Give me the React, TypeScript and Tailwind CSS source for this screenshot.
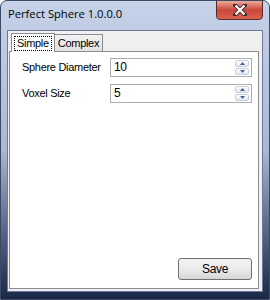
export default function App() {
  return (
    <div className="w-[270px] h-[300px] relative overflow-hidden rounded-t-[7px] border border-[#3c4a66] bg-gradient-to-b from-[#c6d2e8] via-[#a9b8d6] to-[#1b2848] flex flex-col font-['Liberation_Sans',Arial,sans-serif]">
      {/* Title bar */}
      <div className="h-[29px] flex items-start justify-between pl-[7px] pr-[6px] shrink-0">
        <div className="pt-[5px] text-[11.2px] text-black font-['Open_Sans',sans-serif] leading-[16px]">
          Perfect Sphere 1.0.0.0
        </div>
        <div className="w-[47px] h-[20px] -mt-px rounded-b-[4px] border border-[#5a2a2a] bg-gradient-to-b from-[#e9a99a] via-[#c9463a] to-[#d9644f] flex items-center justify-center">
          <svg width="14" height="12" viewBox="0 0 14 12">
            <path d="M2 1 L12 11 M12 1 L2 11" stroke="#3a2a2a" strokeWidth="4" strokeLinecap="square" />
            <path d="M2.5 1.5 L11.5 10.5 M11.5 1.5 L2.5 10.5" stroke="#ffffff" strokeWidth="2.2" />
          </svg>
        </div>
      </div>

      {/* Client area */}
      <div className="flex-1 mx-[6px] mb-[7px] border border-[#6c7a96] bg-[#f0f0f0] flex flex-col pt-[1px] pl-px pr-[3px] pb-[2px] text-[11px] tracking-[-0.3px] text-black">
        {/* Tab strip */}
        <div className="h-[19px] flex items-end pl-[2px] shrink-0">
          <div className="h-[19px] -mb-px z-10 bg-white border border-b-0 border-[#898c95] px-[2px] pt-[2px] flex items-start">
            <span className="border border-dotted border-black px-[2px] leading-[13px]">Simple</span>
          </div>
          <div className="h-[17px] bg-gradient-to-b from-[#f2f2f2] to-[#e1e1e1] border border-b-0 border-l-0 border-[#898c95] px-[3px] pt-[1px] leading-[14px]">
            Complex
          </div>
        </div>

        {/* Tab page */}
        <div className="flex-1 bg-white border border-[#898c95] flex flex-col pt-[6px] pl-[12px] pr-[6px] pb-[8px]">
          {[
            { label: "Sphere Diameter", value: "10" },
            { label: "Voxel Size", value: "5" },
          ].map((row) => (
            <div key={row.label} className="flex items-center h-[19px] mb-[7px]">
              <span className="w-[88px]">{row.label}</span>
              <div className="flex-1 h-[19px] border border-[#abadb3] flex items-stretch">
                <span className="flex-1 pl-[3px] leading-[17px] text-[12px]">{row.value}</span>
                <div className="w-[14px] flex flex-col gap-px py-px mr-[2px]">
                  <div className="flex-1 rounded-[2px] border border-[#c7d0de] bg-gradient-to-b from-[#fbfcfe] to-[#e3e9f3] flex items-center justify-center">
                    <svg width="5" height="3" viewBox="0 0 5 3"><path d="M2.5 0 L5 3 L0 3 Z" fill="#4d6185" /></svg>
                  </div>
                  <div className="flex-1 rounded-[2px] border border-[#c7d0de] bg-gradient-to-b from-[#fbfcfe] to-[#e3e9f3] flex items-center justify-center">
                    <svg width="5" height="3" viewBox="0 0 5 3"><path d="M0 0 L5 0 L2.5 3 Z" fill="#4d6185" /></svg>
                  </div>
                </div>
              </div>
            </div>
          ))}

          <div className="flex-1" />

          <div className="flex justify-end">
            <button className="w-[74px] h-[22px] rounded-[3px] border border-[#707070] bg-gradient-to-b from-[#f2f2f2] via-[#ebebeb] to-[#d6d6d6] text-[12px] leading-[18px]">
              Save
            </button>
          </div>
        </div>
      </div>
    </div>
  );
}
